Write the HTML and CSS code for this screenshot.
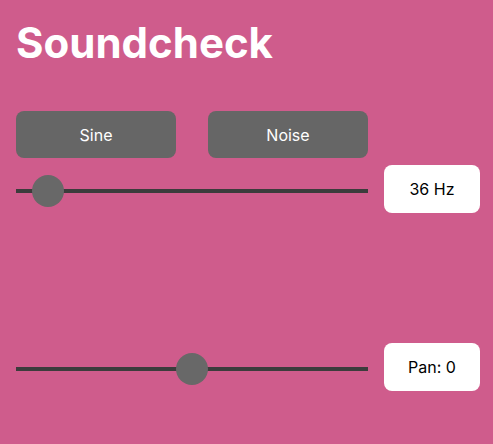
FILE: index.html
```html
<!DOCTYPE html>
<html>
<head>
<meta charset="utf-8">
<link rel="stylesheet" href="styles.css">
</head>
<body>
<main class="app">
  <h1 class="title">Soundcheck</h1>
  <div class="buttons">
    <button class="btn">Sine</button>
    <button class="btn">Noise</button>
  </div>
  <div class="row">
    <input class="slider" type="range" min="0" max="720" value="36">
    <div class="value">36 Hz</div>
  </div>
  <div class="row row-pan">
    <input class="slider" type="range" min="-1" max="1" step="0.1" value="0">
    <div class="value">Pan: 0</div>
  </div>
</main>
</body>
</html>
```
FILE: styles.css
```css
html, body {
  margin: 0;
  padding: 0;
  background: #cf5c8c;
  width: 100%;
  height: 100%;
}
.app {
  padding: 16px;
  font-family: Inter, "Noto Sans", sans-serif;
}
.title {
  margin: 0;
  height: 54px;
  font-size: 42px;
  line-height: 54px;
  font-weight: 700;
  color: #fff;
  letter-spacing: 0;
}
.buttons {
  display: flex;
  gap: 32px;
  margin-top: 41px;
}
.btn {
  width: 160px;
  height: 47px;
  border: none;
  border-radius: 8px;
  background: #666;
  color: #fff;
  font-family: Inter, "Noto Sans", sans-serif;
  font-size: 16px;
  padding: 0;
}
.row {
  display: flex;
  align-items: center;
  gap: 16px;
  margin-top: 7px;
}
.row-pan {
  margin-top: 130px;
}
.slider {
  -webkit-appearance: none;
  appearance: none;
  flex: 0 0 352px;
  width: 352px;
  height: 32px;
  margin: 4px 0 0 0;
  padding: 0;
  background: transparent;
}
.slider::-webkit-slider-runnable-track {
  height: 4px;
  background: #3c3c3c;
}
.slider::-webkit-slider-thumb {
  -webkit-appearance: none;
  width: 32px;
  height: 32px;
  border-radius: 50%;
  background: #686868;
  margin-top: -14px;
  border: none;
}
.value {
  flex: 0 0 96px;
  width: 96px;
  height: 48px;
  background: #fff;
  border-radius: 8px;
  display: flex;
  align-items: center;
  justify-content: center;
  font-size: 16px;
  color: #000;
}
```
